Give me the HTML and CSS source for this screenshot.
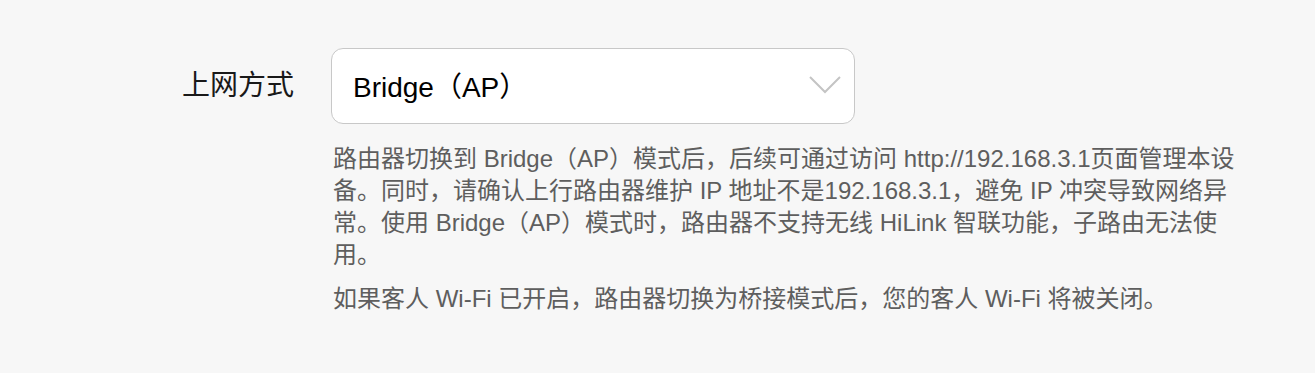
FILE: index.html
```html
<!DOCTYPE html>
<html lang="zh-CN">
<head>
<meta charset="UTF-8" />
<meta name="viewport" content="width=device-width, initial-scale=1" />
<title>上网方式</title>
<link rel="stylesheet" href="styles.css">
</head>
<body>

<div class="form">

  <!-- 上网方式 -->
  <div class="form-row">
    <label class="form-label">上网方式</label>
    <div class="select">
      <span class="select-value">Bridge（AP）</span>
      <svg class="select-arrow" width="32" height="18" viewBox="0 0 32 18">
        <path d="M1 1 L16 16 L31 1" fill="none" stroke="#c4c4c4" stroke-width="2" />
      </svg>
    </div>
  </div>

  <div class="form-tips">
    <p>路由器切换到 Bridge（AP）模式后，后续可通过访问 http://192.168.3.1页面管理本设备。同时，请确认上行路由器维护 IP 地址不是192.168.3.1，避免 IP 冲突导致网络异常。使用 Bridge（AP）模式时，路由器不支持无线 HiLink 智联功能，子路由无法使用。</p>
    <p>如果客人 Wi-Fi 已开启，路由器切换为桥接模式后，您的客人 Wi-Fi 将被关闭。</p>
  </div>

</div>

</body>
</html>
```

FILE: styles.css
```css
body {
  margin: 0; padding: 0;
  font-family: "Liberation Sans", "Noto Sans CJK SC", sans-serif;
  background-color: #f7f7f7;
  color: #191919;
}
.form {
  padding: 48px 0 0 182px;
}
.form-row {
  display: flex;
  align-items: center;
}
.form-label {
  width: 149px;
  font-size: 28px;
  color: #191919;
  margin-top: -6px;
}
.select {
  box-sizing: border-box;
  width: 524px;
  height: 76px;
  background: #fff;
  border: 1.5px solid #c8c8c8;
  border-radius: 12px;
  display: flex;
  align-items: center;
  justify-content: space-between;
  padding: 0 13px 0 21px;
}
.select-value {
  font-size: 28px;
  color: #000;
  margin-top: -3px;
}
.select-arrow {
  margin-top: -2px;
}
/* 说明文字 */
.form-tips {
  margin-left: 151px;
  margin-top: 19px;
  width: 920px;
  font-size: 24px;
  line-height: 32px;
  color: #5e5e5e;
}
.form-tips p {
  margin: 0 0 12px 0;
}
```
